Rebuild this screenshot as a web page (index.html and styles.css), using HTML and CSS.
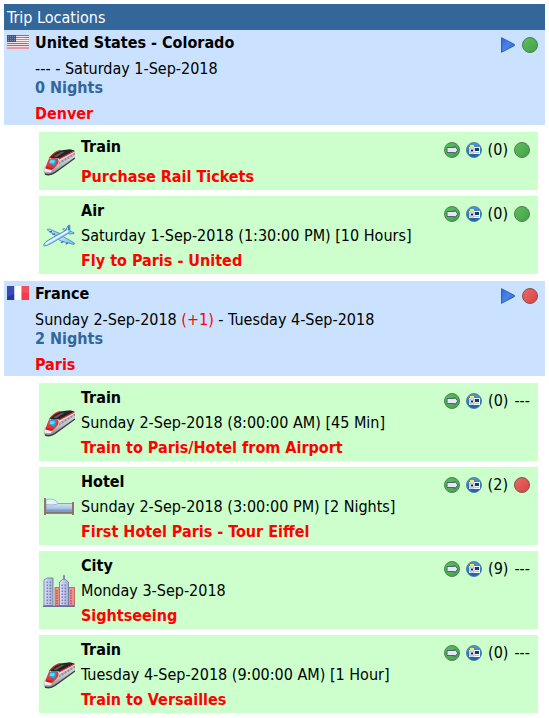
FILE: index.html
```html
<!DOCTYPE html>
<html lang="en">
<head>
<meta charset="utf-8">
<meta name="viewport" content="width=device-width, initial-scale=1">
<title>Trip Locations</title>
<link rel="stylesheet" href="styles.css">
</head>
<body>
<svg class="defs" aria-hidden="true">
  <defs>
    <linearGradient id="g-green" x2="1" y2="1"><stop offset="0" stop-color="#5cc05c"/><stop offset="1" stop-color="#43a046"/></linearGradient>
    <linearGradient id="g-red" x2="1" y2="1"><stop offset="0" stop-color="#ee6a64"/><stop offset="1" stop-color="#d24444"/></linearGradient>
    <linearGradient id="g-play" x2="1" y2="1"><stop offset="0" stop-color="#2f66d2"/><stop offset=".5" stop-color="#4a84e6"/><stop offset="1" stop-color="#2358c4"/></linearGradient>
    <linearGradient id="g-cam" x2="0" y2="1"><stop offset="0" stop-color="#4f9bd2"/><stop offset="1" stop-color="#1f5c9c"/></linearGradient>
    <linearGradient id="g-body" x1=".3" y1=".1" x2=".7" y2=".9"><stop offset=".3" stop-color="#f4f4f6"/><stop offset=".65" stop-color="#b9b9c0"/><stop offset="1" stop-color="#55555c"/></linearGradient>
    <linearGradient id="g-bed" x2="0" y2="1"><stop offset="0" stop-color="#d3e2f8"/><stop offset="1" stop-color="#8fabd6"/></linearGradient>
    <linearGradient id="g-plane" x2="1" y2="1"><stop offset="0" stop-color="#c4ebff"/><stop offset="1" stop-color="#72b8ec"/></linearGradient>
    <linearGradient id="g-tower" x2="1" y2="0"><stop offset="0" stop-color="#dfe4fa"/><stop offset="1" stop-color="#a4aed8"/></linearGradient>
    <pattern id="windows" width="3" height="3" patternUnits="userSpaceOnUse"><path d="M.5.5h1.6v1.6H.5z" fill="#7281b9"/></pattern>
  </defs>
  <symbol id="dot-green" viewBox="0 0 16 16"><circle cx="8" cy="8" r="7.5" fill="url(#g-green)" stroke="#4d7d50"/></symbol>
  <symbol id="dot-red" viewBox="0 0 16 16"><circle cx="8" cy="8" r="7.5" fill="url(#g-red)" stroke="#85504e"/></symbol>
  <symbol id="play" viewBox="0 0 16 16"><path d="M1.500.7 14.500 7.500v1L1.500 15.300z" fill="url(#g-play)" stroke="#2860c8" stroke-linejoin="round"/></symbol>
  <symbol id="go" viewBox="0 0 16 16"><circle cx="8" cy="8" r="7.500" fill="url(#g-green)" stroke="#4b8152"/><path d="M3 5.500h7.500V4l3.300 4-3.300 4v-1.500H3z" fill="#e3e8f2" stroke="#4a6577" stroke-width="1"/></symbol>
  <symbol id="camera" viewBox="0 0 16 16"><circle cx="8" cy="8" r="7.500" fill="url(#g-cam)" stroke="#5383a8"/><path d="M4 3h4v2H4z" fill="#ffec38"/><path d="M3 5h11v7H3z" fill="#f5fbff"/><path d="M9 6h4v3H9z" fill="#173b61"/><path d="M9 10h4v1H9z" fill="#a9c6e2"/><path d="M4 6h4v5H4z" fill="#fff" stroke="#5d7f9f" stroke-width=".6"/><path d="M5 7.500h2v2H5z" fill="#172d43"/></symbol>
  <symbol id="flag-us" viewBox="0 0 22 14"><path d="M0 0h22v14H0z" fill="#f7e3e6"/><path d="M0 .5h22M0 2.500h22M0 4.500h22M0 6.500h22M0 8.500h22M0 10.500h22M0 13h22" stroke="#d15363"/><path d="M0 0h9v7H0z" fill="#40558c"/><path d="M1 1.500h7M1 3.500h7M1 5.500h7" stroke="#8c9abf" stroke-width=".8" stroke-dasharray="1 1"/><path d="M9 3q7-2 13 1v5q-7-3-13-1z" fill="#fff" opacity=".25"/></symbol>
  <symbol id="flag-fr" viewBox="0 0 22 14"><path d="M0 0h7.500v14H0z" fill="#2638a3"/><path d="M7.500 0h7v14h-7z" fill="#fff"/><path d="M14.500 0H22v14h-7.500z" fill="#f33b4c"/><path d="M0 0h22v7Q11 5 0 11z" fill="#fff" opacity=".1"/></symbol>
  <symbol id="train" viewBox="0 0 32 32">
    <path d="M.7 26C.3 21 3.500 14.500 7.500 10.500Q12 6 17 4.500L27 3.500q3 0 5 1.500v6.500L13 26q-5 3.500-10 2.500-2-.5-2.300-2.500z" fill="url(#g-body)"/>
    <path d="M7.500 10.500Q12 6 17 4.500L27 3.300l4.500 1.200L17 12.500 7 12z" fill="#252529"/>
    <path d="m10 10.500 8-4.500 4-.5-8.500 5.500z" fill="#5b5b60"/>
    <path d="M6 12.500Q11 6 17 4.500M16 13 31.500 5" fill="none" stroke="#e3201e" stroke-width="1.100"/>
    <path d="M5.500 13.500q5-2.500 9.500-.5 1.500 3-1 6l-4 4.500-7.500-2z" fill="#ee302c"/>
    <path d="M6.500 13.500q4-1.500 7 .5 0 3.500-2 6l-6-2.500z" fill="#1ba4dc"/>
    <path d="M7.500 14.300q3-.8 4.500.4L10.500 17.500l-4-.8z" fill="#5bdcf8"/>
    <path d="M2 22.500 9 24l-1.500 2.500-6-1z" fill="#f1eef0"/>
    <path d="M3 20.500 10 22l-1.500 2-6-1.500z" fill="#c81a1c"/>
    <path d="M16.500 15.500 32 6.500v2.300L16 18.500z" fill="#8c8d98"/>
    <path d="M18 15v2.200M21 13.200v2.200M24 11.500v2.200M27 9.700v2.200M30 8v2" stroke="#e6e6ee" stroke-width=".8"/>
    <path d="M2 28q5 2 10-1.500L32 12" fill="none" stroke="#38383d" stroke-width="1.400"/>
  </symbol>
  <symbol id="plane" viewBox="0 0 32 32"><g fill="url(#g-plane)" stroke="#4485bb" stroke-width=".8" stroke-linejoin="round">
    <path d="M14 17 4 9.500l2.500-.5L18 14z"/>
    <path d="m22.500 11.500-3-2.500 2-.3 4 2z"/>
    <path d="m15 18.500 5-2 11.500 6.500-.5 1.500-14-3.700z"/>
    <path d="m24 12.500 3-1.500 4 1.700v1l-5 .3z"/>
    <path d="M.7 24.500Q2 21.500 8 18.500l14.500-8 2.500-5 1.800-.5.2 5q1 1.500-1.500 3.200L9 23q-5 3-7.500 3-1 0-.8-1.500z"/></g>
    <path d="M2.500 24Q12 18.500 25 11" fill="none" stroke="#eefaff" stroke-width="1.700"/>
    <path d="m6.500 12 2.500-.6M9.500 14.300l2.500-.5M20.500 21.500l-2.300 1.300M25 23l-2.300 1.300M25.700 6l.3 4" stroke="#286fac" stroke-width="1.300"/>
  </symbol>
  <symbol id="bed" viewBox="0 0 32 32">
    <path d="M3 12.500h27v8.500H3z" fill="url(#g-bed)" stroke="#7892bb" stroke-width=".8"/>
    <path d="M3 18.500h26v3H3z" fill="#7f9bc8"/>
    <path d="M3 8.500q9-2 12 4-2 2-12 1z" fill="#e4f3fb" stroke="#8aafd0" stroke-width=".8"/>
    <path d="M2.500 22h28" stroke="#825e56" stroke-width="1.500"/>
    <path d="M2 7v17M30 11v13" stroke="#93695e" stroke-width="1.800"/>
  </symbol>
  <symbol id="city" viewBox="0 0 32 32"><g stroke="#6872a5" stroke-width=".8">
    <path d="M12 12.500h6v18h-6z" fill="#eb9189" stroke="#b85759"/>
    <path d="M25 12.500h6.500v18H25z" fill="#ec9088" stroke="#b85759"/>
    <path d="M1 5 4 3h6v27.500H1z" fill="url(#g-tower)"/>
    <path d="M16.500 30.500V7l3-2.500h1V.5h1v4h1l3 2.500v23.500z" fill="url(#g-tower)"/></g>
    <path d="M2 6h7v24H2zM17 9h7v21h-7z" fill="url(#windows)"/>
    <path d="M14 15v14M28 15v14" stroke="#ae5361" stroke-width="1.400" stroke-dasharray="1.500 1"/>
    <path d="M0 31.300h32" stroke="#666f9e" stroke-width="1.400"/>
  </symbol>
</svg>

<main>
  <h1 class="heading">Trip Locations</h1>

  <section class="location">
    <svg class="flag" role="img" aria-label="United States"><use href="#flag-us"/></svg>
    <div class="details">
      <h2 class="name">United States - Colorado</h2>
      <p>--- - Saturday 1-Sep-2018</p>
      <p class="nights">0 Nights</p>
      <p class="title">Denver</p>
    </div>
    <div class="actions">
      <button class="icon" aria-label="Open"><svg><use href="#play"/></svg></button>
      <svg class="icon" role="img" aria-label="Complete"><use href="#dot-green"/></svg>
    </div>
  </section>
  <ul class="items">
    <li class="item">
      <svg class="kind" aria-hidden="true"><use href="#train"/></svg>
      <div class="info brief"><h3>Train</h3><p class="title">Purchase Rail Tickets</p></div>
      <div class="actions">
        <button class="icon" aria-label="Go"><svg><use href="#go"/></svg></button>
        <button class="icon" aria-label="Photos"><svg><use href="#camera"/></svg></button>
        <span>(0)</span>
        <svg class="icon" role="img" aria-label="Complete"><use href="#dot-green"/></svg>
      </div>
    </li>
    <li class="item">
      <svg class="kind" aria-hidden="true"><use href="#plane"/></svg>
      <div class="info"><h3>Air</h3><p>Saturday 1-Sep-2018 (1:30:00 PM) [10 Hours]</p><p class="title">Fly to Paris - United</p></div>
      <div class="actions">
        <button class="icon" aria-label="Go"><svg><use href="#go"/></svg></button>
        <button class="icon" aria-label="Photos"><svg><use href="#camera"/></svg></button>
        <span>(0)</span>
        <svg class="icon" role="img" aria-label="Complete"><use href="#dot-green"/></svg>
      </div>
    </li>
  </ul>

  <section class="location">
    <svg class="flag" role="img" aria-label="France"><use href="#flag-fr"/></svg>
    <div class="details">
      <h2 class="name">France</h2>
      <p>Sunday 2-Sep-2018 <span class="offset">(+1)</span> - Tuesday 4-Sep-2018</p>
      <p class="nights">2 Nights</p>
      <p class="title">Paris</p>
    </div>
    <div class="actions">
      <button class="icon" aria-label="Open"><svg><use href="#play"/></svg></button>
      <svg class="icon" role="img" aria-label="Incomplete"><use href="#dot-red"/></svg>
    </div>
  </section>
  <ul class="items">
    <li class="item">
      <svg class="kind" aria-hidden="true"><use href="#train"/></svg>
      <div class="info"><h3>Train</h3><p>Sunday 2-Sep-2018 (8:00:00 AM) [45 Min]</p><p class="title">Train to Paris/Hotel from Airport</p></div>
      <div class="actions">
        <button class="icon" aria-label="Go"><svg><use href="#go"/></svg></button>
        <button class="icon" aria-label="Photos"><svg><use href="#camera"/></svg></button>
        <span>(0)</span>
        <span>---</span>
      </div>
    </li>
    <li class="item">
      <svg class="kind" aria-hidden="true"><use href="#bed"/></svg>
      <div class="info"><h3>Hotel</h3><p>Sunday 2-Sep-2018 (3:00:00 PM) [2 Nights]</p><p class="title">First Hotel Paris - Tour Eiffel</p></div>
      <div class="actions">
        <button class="icon" aria-label="Go"><svg><use href="#go"/></svg></button>
        <button class="icon" aria-label="Photos"><svg><use href="#camera"/></svg></button>
        <span>(2)</span>
        <svg class="icon" role="img" aria-label="Incomplete"><use href="#dot-red"/></svg>
      </div>
    </li>
    <li class="item">
      <svg class="kind" aria-hidden="true"><use href="#city"/></svg>
      <div class="info"><h3>City</h3><p>Monday 3-Sep-2018</p><p class="title">Sightseeing</p></div>
      <div class="actions">
        <button class="icon" aria-label="Go"><svg><use href="#go"/></svg></button>
        <button class="icon" aria-label="Photos"><svg><use href="#camera"/></svg></button>
        <span>(9)</span>
        <span>---</span>
      </div>
    </li>
    <li class="item">
      <svg class="kind" aria-hidden="true"><use href="#train"/></svg>
      <div class="info"><h3>Train</h3><p>Tuesday 4-Sep-2018 (9:00:00 AM) [1 Hour]</p><p class="title">Train to Versailles</p></div>
      <div class="actions">
        <button class="icon" aria-label="Go"><svg><use href="#go"/></svg></button>
        <button class="icon" aria-label="Photos"><svg><use href="#camera"/></svg></button>
        <span>(0)</span>
        <span>---</span>
      </div>
    </li>
  </ul>
</main>
</body>
</html>
```
FILE: styles.css
```css
* { box-sizing: border-box; }

body {
  margin: 4px;
  background: #fff;
  color: #000;
  font: 16px/19px Tahoma, "DejaVu Sans Condensed", "Noto Sans", sans-serif;
}

h1, h2, h3, p, ul { margin: 0; padding: 0; font-size: inherit; }

.defs { position: absolute; width: 0; height: 0; }

.heading {
  padding: 4px 3px 3px;
  background: #336699;
  color: #fff;
  font-weight: normal;
}

.location {
  display: flex;
  align-items: flex-start;
  gap: 6px;
  padding: 3px 7px 2px 3px;
  background: #cae2ff;
}

.flag { flex: none; width: 22px; height: 14px; margin-top: 2px; }

.details { flex: 1; }

.name { margin-bottom: 7px; }

.nights { color: #336699; font-weight: bold; }

.title { color: #ff0000; font-weight: bold; }

.details .title { margin-top: 7px; }

.offset { color: #ff0000; }

.actions {
  display: flex;
  align-items: center;
  gap: 6px;
  margin-top: 4px;
}

.icon {
  display: block;
  flex: none;
  width: 16px;
  height: 16px;
  padding: 0;
  border: 0;
  background: none;
}

.icon svg { display: block; width: 16px; height: 16px; }

.items {
  display: flex;
  flex-direction: column;
  gap: 6px;
  padding: 7px 7px 7px 35px;
  list-style: none;
}

.item {
  display: flex;
  align-items: flex-start;
  gap: 6px;
  padding: 5px 8px 4px 4px;
  background: #ccffcc;
}

.kind { flex: none; align-self: center; width: 32px; height: 32px; }

.info { display: flex; flex: 1; flex-direction: column; gap: 6px; }

.info.brief { gap: 11px; }

.item .actions { margin-top: 3px; }
```
